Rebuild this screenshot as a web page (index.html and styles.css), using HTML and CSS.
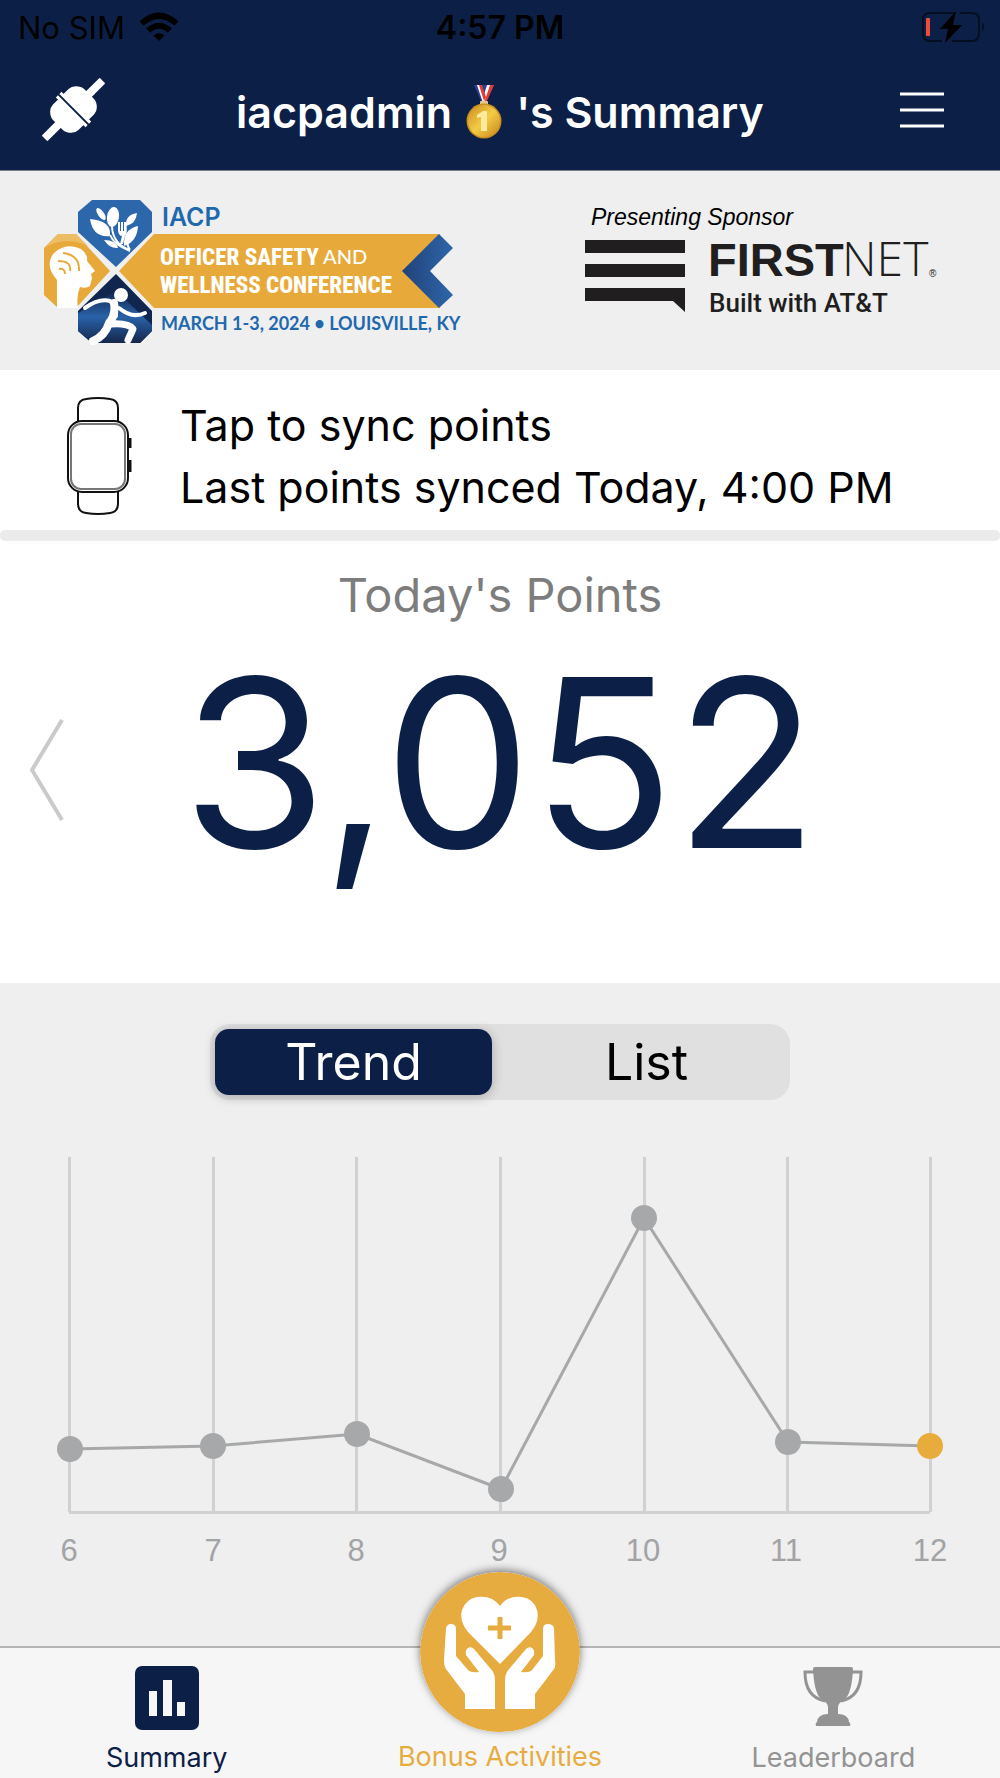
FILE: index.html
```html
<!DOCTYPE html>
<html lang="en">
<head>
<meta charset="utf-8">
<meta name="viewport" content="width=device-width, initial-scale=1">
<title>Summary</title>
<link rel="stylesheet" href="styles.css">
</head>
<body>
<header class="top">
  <div class="status">
    <div class="carrier">
      <span>No SIM</span>
      <svg width="40" height="30" viewBox="0 0 40 30" aria-hidden="true">
        <path d="M20 29 L14.500 23.500 Q20 19 25.500 23.500 Z"/>
        <path d="M9 18.500 Q20 9 31 18.500" fill="none" stroke="#000" stroke-width="6"/>
        <path d="M2.500 11.500 Q20 -4 37.500 11.500" fill="none" stroke="#000" stroke-width="6"/>
      </svg>
    </div>
    <strong class="clock">4:57 PM</strong>
    <svg class="battery" width="66" height="34" viewBox="0 0 66 34" aria-hidden="true">
      <path d="M35 3 H10 Q3 3 3 10 V23 Q3 31 10 31 H22 M32 31 H52 Q59 31 59 23 V10 Q59 3 52 3 H40" fill="none" stroke="#060f22" stroke-width="2"/>
      <path d="M62 12 Q66 17 62 22 Z" fill="#060f22"/>
      <rect x="6" y="8" width="4" height="18" rx="1" fill="#f04a3e"/>
      <path d="M36 1 L20 19 H28 L25 33 L42 15 H33 Z"/>
    </svg>
  </div>
  <div class="titlebar">
    <button class="connect" aria-label="Connect device">
      <svg width="64" height="64" viewBox="0 0 64 64" aria-hidden="true">
        <g transform="translate(31.500 31.500) rotate(45)" fill="#fff">
          <rect x="-4" y="-41" width="8" height="21" rx="1"/>
          <rect x="-4" y="20" width="8" height="21" rx="1"/>
          <path d="M-18 -2 V-11 Q-18 -15 -15 -18 Q-11 -22 -7 -22 H7 Q11 -22 15 -18 Q18 -15 18 -11 V-2 Z"/>
          <path d="M-18 2 V11 Q-18 15 -15 18 Q-11 22 -7 22 H7 Q11 22 15 18 Q18 15 18 11 V2 Z"/>
          <rect x="-21" y="-4" width="42" height="3"/>
          <rect x="-21" y="1" width="42" height="3"/>
        </g>
      </svg>
    </button>
    <h1>iacpadmin<svg class="medal" width="36" height="56" viewBox="0 0 36 56" role="img" aria-label="first place medal">
        <defs><linearGradient id="gold" x1="0" y1="0" x2="1" y2="1"><stop offset="0" stop-color="#c98d1d"/><stop offset=".5" stop-color="#f3cb45"/><stop offset="1" stop-color="#c9861c"/></linearGradient></defs>
        <path d="M8 1 H28 L20 19 H16 Z" fill="#2b3f94"/>
        <path d="M11 1 H15 L20 15 L18 19 H17 Z M21 1 H25 L19 19 L17 14 Z" fill="#fff"/>
        <path d="M13 1 H16 L20 13 L18 17 Z M24 1 H28 L20 19 H18 Z" fill="#e23b36"/>
        <rect x="14" y="17" width="8" height="4" rx="1" fill="#e6c98a"/>
        <circle cx="18" cy="37" r="17.500" fill="#c98f22"/>
        <circle cx="18" cy="37" r="16" fill="url(#gold)"/>
        <path d="M11 31 L17 27 H21 V47 H15 V33 L11 34 Z" fill="#fbeb9a"/>
      </svg>'s Summary</h1>
    <button class="menu" aria-label="Menu">
      <svg width="44" height="38" viewBox="0 0 44 38" aria-hidden="true"><path d="M0 3 H44 M0 19 H44 M0 35 H44" stroke="#fff" stroke-width="3"/></svg>
    </button>
  </div>
</header>

<main>
  <section class="sponsors" aria-label="Sponsors">
    <svg width="420" height="150" viewBox="0 0 420 150" role="img" aria-label="IACP Officer Safety and Wellness Conference">
      <defs>
        <linearGradient id="night" x1="0" y1="0" x2="0" y2="1"><stop offset="0" stop-color="#12264d"/><stop offset=".5" stop-color="#2a62a8"/><stop offset="1" stop-color="#14264c"/></linearGradient>
        <linearGradient id="arrow" x1="0" y1="0" x2="1" y2="0"><stop offset="0" stop-color="#21427a"/><stop offset="1" stop-color="#2d66a9"/></linearGradient>
      </defs>
      <path d="M48 5 H96 L108 17 V37 L72 72 L34 37 V17 Z" fill="#2c67ac"/>
      <path d="M14 39 H32 L66 76 L32 113 H14 L0 100 V53 Z" fill="#e7aa3a"/>
      <path d="M14 39 H32 L44 51 Q22 40 0 53 Z" fill="#edbd66"/>
      <path d="M72 79 L108 116 V136 L96 148 H48 L34 136 V116 Z" fill="#11264f"/>
      <path d="M72 96 L108 130 V136 L96 148 H48 L34 136 V118 Z" fill="url(#night)"/>
      <path d="M110 39 H396 L360 76 L396 113 H110 L75 76 Z" fill="#e7aa3a"/>
      <path d="M395 39 L409 53 L386 76 L409 100 L395 113 L358 76 Z" fill="url(#arrow)"/>
      <g fill="#fff">
        <ellipse cx="69" cy="22" rx="6" ry="10" transform="rotate(8 69 22)"/>
        <ellipse cx="57" cy="19" rx="3" ry="7" transform="rotate(-35 57 19)"/>
        <path d="M46 24 Q68 26 66 41 Q49 43 46 24 Z M94 31 Q79 34 80 51 Q93 47 94 31 Z M93 18 Q81 20 82 31 Q92 29 93 18 Z M60 45 Q72 45 74 53 Q66 54 60 45 Z"/>
        <path d="M74 27 V36 Q75 41 78 41 L76 49 H79 L81 41 Q84 38 82 27 H80 V36 H79 V27 H77 V36 H76 V27 Z"/>
      </g>
      <path d="M68 32 Q69 49 86 55 M66 40 Q70 50 86 56 M90 36 Q79 44 86 55" fill="none" stroke="#fff" stroke-width="2"/>
      <path d="M13 113 V85 Q0 70 10 58 Q22 47 37 54 Q44 59 43 66 L51 76 L47 79 L48 83 L46 91 Q42 94 36 92 Q32 101 34 113 Z" fill="#fff"/>
      <path d="M14 66 Q28 66 26 76 M19 58 Q36 60 35 76 M15 74 Q21 73 21 79" fill="none" stroke="#e7aa3a" stroke-width="2"/>
      <g fill="none" stroke="#fff" stroke-linecap="round" stroke-linejoin="round">
        <path d="M41 113 Q55 103 66 106 Q73 111 72 121" stroke-width="4"/>
        <path d="M70 108 Q72 120 65 128 Q61 141 49 146" stroke-width="8"/>
        <path d="M67 129 Q85 128 89 134 L84 145" stroke-width="7"/>
        <path d="M75 113 Q88 124 101 118" stroke-width="4"/>
      </g>
      <circle cx="77" cy="100" r="7" fill="#fff"/>
      <text x="118" y="31" class="l-iacp">IACP</text>
      <text x="116" y="70" class="l-cond">OFFICER SAFETY</text>
      <text x="279" y="69" class="l-and">AND</text>
      <text x="116" y="98" class="l-cond">WELLNESS CONFERENCE</text>
      <text x="117" y="135" class="l-date">MARCH 1-3, 2024 • LOUISVILLE, KY</text>
    </svg>
    <svg class="firstnet" width="360" height="120" viewBox="0 0 360 120" role="img" aria-label="Presenting Sponsor FirstNet, Built with AT&amp;T">
      <text x="6" y="25" class="s-pres">Presenting Sponsor</text>
      <path d="M0 40 H100 V53 H0 Z M0 64 H100 V77 H0 Z M0 88 H100 V112 L88 101 H0 Z" fill="#211e20"/>
      <text x="123" y="76" class="s-first">FIRST</text>
      <text x="257" y="76" class="s-net">NET</text>
      <text x="344" y="77" class="s-reg">®</text>
      <text x="124" y="112" class="s-built">Built with AT&amp;T</text>
    </svg>
  </section>

  <button class="sync">
    <svg width="68" height="120" viewBox="0 0 68 120" fill="none" stroke="#111" stroke-width="2" aria-hidden="true">
      <path d="M12 25 V12 Q12 4 20 3 Q32 1 44 3 Q52 4 52 12 V25 M12 95 V108 Q12 116 20 117 Q32 119 44 117 Q52 116 52 108 V95"/>
      <rect x="2" y="25" width="60" height="71" rx="14"/>
      <rect x="5" y="28" width="54" height="65" rx="10" stroke="#777"/>
      <path d="M64 42 V52 M64 64 V76" stroke-width="3"/>
    </svg>
    <span>Tap to sync points<br>Last points synced Today, 4:00 PM</span>
  </button>
  <hr>

  <section class="points">
    <h2>Today's Points</h2>
    <div class="score-row">
      <button class="prev" aria-label="Previous day">
        <svg width="34" height="104" viewBox="0 0 34 104" aria-hidden="true"><path d="M32 2 L2 52 L32 102" fill="none" stroke="#c9caca" stroke-width="4"/></svg>
      </button>
      <p class="score">3,052</p>
    </div>
  </section>

  <section class="history">
    <div class="segmented" role="group" aria-label="View">
      <button class="active" aria-pressed="true">Trend</button>
      <button aria-pressed="false">List</button>
    </div>
    <svg class="chart" viewBox="0 0 1000 440" role="img" aria-label="Points per day, 6 to 12">
      <path d="M69.500 17 V372 M213.500 17 V372 M356.500 17 V372 M500.500 17 V372 M644.500 17 V372 M787.500 17 V372 M930.500 17 V372 M69 372.500 H930" fill="none" stroke="#d0d1d1" stroke-width="3"/>
      <polyline points="70,309 213,306 357,294 501,349 644,78 788,302 930,306" fill="none" stroke="#a7a8aa" stroke-width="3"/>
      <g fill="#a7a8aa">
        <circle cx="70" cy="309" r="13"/><circle cx="213" cy="306" r="13"/><circle cx="357" cy="294" r="13"/><circle cx="501" cy="349" r="13"/><circle cx="644" cy="78" r="13"/><circle cx="788" cy="302" r="13"/>
      </g>
      <circle cx="930" cy="306" r="13" fill="#e8ac3c"/>
      <g class="days">
        <text x="69" y="421">6</text><text x="213" y="421">7</text><text x="356" y="421">8</text><text x="499" y="421">9</text><text x="643" y="421">10</text><text x="786" y="421">11</text><text x="930" y="421">12</text>
      </g>
    </svg>
  </section>
</main>

<nav class="tabs">
  <a href="#summary" class="current" aria-current="page">
    <svg width="64" height="64" viewBox="0 0 64 64" aria-hidden="true"><rect x="0" y="0" width="64" height="64" rx="7" fill="#0c2047"/><path d="M14 25 H22 V50 H14 Z M28 14 H37 V50 H28 Z M42 36 H50 V50 H42 Z" fill="#f7f7f7"/></svg>
    <span>Summary</span>
  </a>
  <a href="#bonus" class="bonus">
    <svg width="160" height="160" viewBox="0 0 160 160" aria-hidden="true">
      <circle cx="80" cy="80" r="80" fill="#e7ac3f"/>
      <path d="M80 92 L48 60 Q39 49 42 38 Q46 27 57 25 Q72 23 80 34 Q88 23 102 25 Q114 27 117 38 Q120 49 111 60 Z" fill="#fff"/>
      <path d="M80 45 V67 M68 56 H91" stroke="#e7ac3f" stroke-width="5"/>
      <path d="M45 137 V122 L26 97 Q24 94 24 88 L26 56 Q27 52 31 52 Q36 52 36 57 V84 L48 98 Q51 101 59 100 L46 83 Q45 78 48 76 Q51 74 54 77 L70 96 Q75 101 75 108 V137 Z" fill="#fff"/>
      <path d="M115 137 V122 L134 97 Q136 94 135 88 L134 56 Q133 52 128 52 Q123 52 123 57 V84 L112 98 Q109 101 101 100 L114 83 Q115 78 112 76 Q109 74 106 77 L90 96 Q85 101 85 108 V137 Z" fill="#fff"/>
    </svg>
    <span>Bonus Activities</span>
  </a>
  <a href="#leaderboard">
    <svg width="64" height="64" viewBox="0 0 64 64" fill="#939393" aria-hidden="true">
      <path d="M12 3 Q12 1 14 1 H50 Q52 1 52 3 Q51 25 45 32 Q37 37 37 41 V48 Q47 48 48 56 Q50 57 49 60 H15 Q14 57 16 56 Q17 48 27 48 V41 Q27 37 19 32 Q13 25 12 3 Z"/>
      <path d="M13 6 H4 Q4 31 24 35 M51 6 H60 Q60 31 40 35" fill="none" stroke="#939393" stroke-width="3"/>
    </svg>
    <span>Leaderboard</span>
  </a>
</nav>
</body>
</html>
```
FILE: styles.css
```css
* { box-sizing: border-box; }
body {
  margin: 0;
  min-height: 100vh;
  display: flex;
  flex-direction: column;
  background: #efefef;
  color: #000;
  font-family: Inter, "Liberation Sans", sans-serif;
}
button { border: 0; padding: 0; margin: 0; background: none; font: inherit; color: inherit; cursor: pointer; }
svg { display: block; flex: none; }
h1, h2, p { margin: 0; font-weight: 400; }

.top { background: #0c2047; border-bottom: 1px solid #777c88; }
.status {
  display: grid;
  grid-template-columns: 1fr auto 1fr;
  align-items: center;
  height: 54px;
  padding: 0 14px;
  font-size: 31px;
}
.carrier { display: flex; align-items: center; gap: 14px; padding-left: 4px; }
.clock { font-size: 32px; font-weight: 600; }
.battery { justify-self: end; }
.titlebar {
  display: grid;
  grid-template-columns: 1fr auto 1fr;
  align-items: center;
  height: 116px;
  padding-bottom: 4px;
}
.connect { justify-self: start; padding-left: 42px; }
.menu { justify-self: end; padding-right: 56px; }
h1 { display: flex; align-items: center; padding-top: 4px; color: #fff; font-size: 43px; font-weight: 600; }
.medal { margin: 0 14px; }

.sponsors {
  display: flex;
  justify-content: space-between;
  align-items: flex-start;
  height: 199px;
  padding: 24px 55px 0 44px;
}
.firstnet { margin-top: 5px; }
.l-iacp { font: 600 25px Inter, sans-serif; fill: #2068ae; }
.l-cond { font: 800 23px "Roboto Condensed", Roboto, sans-serif; fill: #fff; }
.l-and { font: 500 20px Lato, sans-serif; fill: #fff; }
.l-date { font: 700 18px Lato, sans-serif; fill: #2068ae; }
.s-pres { font: italic 23px "Liberation Sans", sans-serif; fill: #000; }
.s-first { font: 800 47px "Liberation Sans", sans-serif; fill: #211e20; }
.s-net { font: 300 48px "Open Sans", sans-serif; fill: #211e20; }
.s-reg { font: 10px "Liberation Sans", sans-serif; fill: #211e20; }
.s-built { font: 500 26px Roboto, sans-serif; fill: #211e20; }

.sync {
  display: flex;
  align-items: center;
  gap: 46px;
  width: 100%;
  height: 160px;
  padding: 12px 66px 0;
  background: #fff;
  text-align: left;
  font-size: 43px;
  line-height: 62px;
}
hr { height: 11px; margin: 0; border: 0; border-radius: 5px; background: #ebebeb; box-shadow: 0 0 0 5px #fff; }

.points { height: 442px; padding-top: 24px; background: #fff; }
h2 { text-align: center; font-size: 47px; line-height: 60px; color: #7d7d7d; }
.score-row { display: grid; grid-template-columns: 64px 1fr 64px; align-items: center; height: 290px; }
.prev { justify-self: end; }
.score { padding-bottom: 14px; text-align: center; font-size: 235px; line-height: 276px; color: #0c2047; }

.history { padding-top: 41px; }
.segmented {
  display: grid;
  grid-template-columns: 1fr 1fr;
  gap: 16px;
  width: 58%;
  height: 76px;
  margin: 0 auto;
  padding: 5px;
  border-radius: 20px;
  background: #e0e0e0;
  font-size: 50px;
}
.segmented button { border-radius: 14px; }
.segmented .active { color: #fff; background: #0c2047; box-shadow: 0 2px 12px rgba(0, 0, 0, .25); }
.chart { width: 100%; margin-top: 40px; }
.days { font-family: "Liberation Sans", sans-serif; font-size: 31px; text-anchor: middle; fill: #a2a3a5; }

.tabs {
  display: grid;
  grid-template-columns: 1fr 1fr 1fr;
  grid-template-rows: minmax(0, 1fr);
  height: 132px;
  margin-top: auto;
  border-top: 2px solid #b5b5b5;
  background: #f6f6f6;
}
.tabs a {
  display: flex;
  flex-direction: column;
  align-items: center;
  justify-content: flex-end;
  gap: 12px;
  padding-bottom: 4px;
  color: #939393;
  text-decoration: none;
  font-size: 27px;
  line-height: 32px;
}
.tabs .current { color: #0c2047; }
.tabs .bonus { gap: 9px; padding-bottom: 5px; color: #e7ac3f; }
.bonus svg { border-radius: 50%; box-shadow: 0 -2px 8px rgba(0, 0, 0, .5); }
```
